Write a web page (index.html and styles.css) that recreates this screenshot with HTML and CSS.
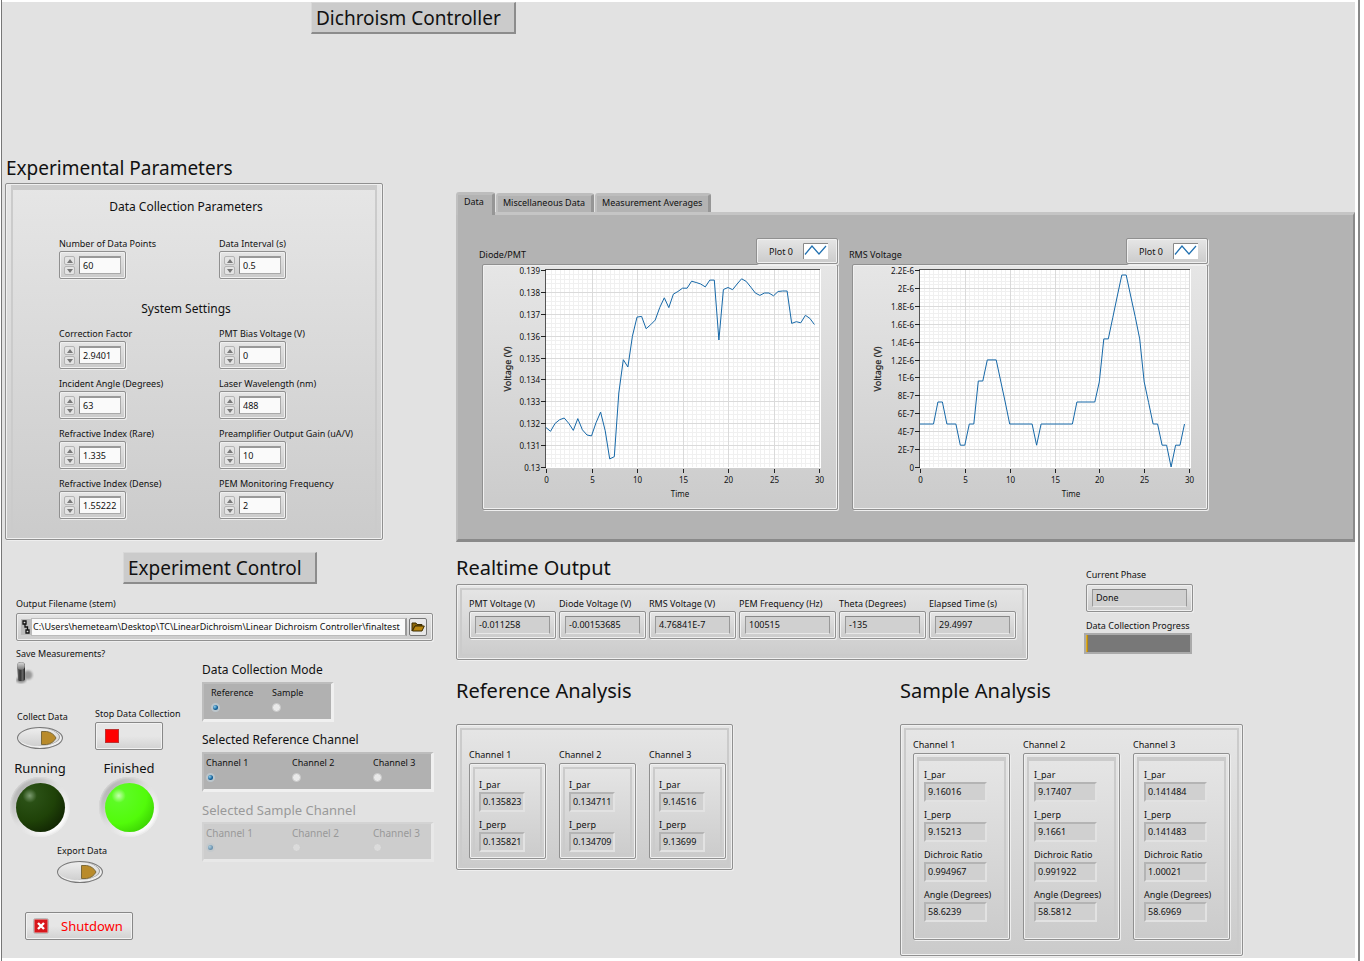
FILE: index.html
```html
<!DOCTYPE html>
<html lang="en">
<head>
<meta charset="utf-8">
<title>Dichroism Controller</title>
<link rel="stylesheet" href="styles.css">
</head>
<body>
<div class="window">
<main class="front-panel">
  <h1 class="plate plate-main">Dichroism Controller</h1>
  <div class="columns">
    <div class="left">
      <section>
        <h2 class="title">Experimental Parameters</h2>
        <div class="cluster params"><div class="cluster-in">
          <h3 class="subtitle">Data Collection Parameters</h3>
          <div class="fields" id="collection-fields"></div>
          <h3 class="subtitle">System Settings</h3>
          <div class="fields" id="system-fields"></div>
        </div></div>
      </section>

      <section class="control">
        <h2 class="plate plate-control">Experiment Control</h2>
        <label class="label" for="path">Output Filename (stem)</label>
        <div class="path bevel">
          <span class="path-mark"><svg width="8" height="14" viewBox="0 0 8 14"><path d="M1 1h3v3H1zM4 10h3v3H4zM3 4v3h2.500v3" fill="#ddd" stroke="#111" stroke-width="1.300"/></svg></span>
          <input id="path" type="text" value="C:\Users\hemeteam\Desktop\TC\LinearDichroism\Linear Dichroism Controller\finaltest">
          <button type="button" class="browse" aria-label="Browse"><svg width="14" height="10" viewBox="0 0 14 10"><path d="M1 9V1h4l1 1.500h5V4H4L1 9z" fill="#8a6508" stroke="#3d2c00"/><path d="M1.500 9 4 4h9.300L11 9z" fill="#b8860f" stroke="#3d2c00"/></svg></button>
        </div>
        <div class="control-grid">
          <div class="actions">
            <label class="label" for="save">Save Measurements?</label>
            <div class="toggle"><input id="save" type="checkbox">
              <svg width="20" height="24" viewBox="0 0 20 24">
                <defs><linearGradient id="lever"><stop offset="0" stop-color="#777"/><stop offset=".4" stop-color="#333"/><stop offset=".7" stop-color="#666"/><stop offset="1" stop-color="#222"/></linearGradient>
                <linearGradient id="tip" x2="0" y2="1"><stop offset="0" stop-color="#ddd"/><stop offset="1" stop-color="#777"/></linearGradient>
                <filter id="soft"><feGaussianBlur stdDeviation="1"/></filter></defs>
                <circle cx="12" cy="14" r="4.500" fill="#999" filter="url(#soft)"/>
                <ellipse cx="5" cy="19" rx="5" ry="3" fill="#888" filter="url(#soft)"/>
                <path d="M1 5a4 4 0 0 1 8 0v13q0 2-4 2t-3-2z" fill="url(#lever)"/>
                <circle cx="5" cy="5" r="3.800" fill="url(#tip)"/>
              </svg></div>
            <div class="pair">
              <div class="act"><span class="label" id="l-collect">Collect Data</span><button type="button" class="oval" aria-labelledby="l-collect"><svg width="16" height="14" viewBox="0 0 16 14"><path d="M.500.500h5Q12 1.500 15 7q-3 5.500-9.500 6.500h-5z" fill="#b98b2b" stroke="#7d6a3a"/></svg></button></div>
              <div class="act"><span class="label" id="l-stop">Stop Data Collection</span><button type="button" class="stop glossy" aria-labelledby="l-stop"><i></i></button></div>
            </div>
            <div class="leds">
              <div class="led-box"><span class="led-name">Running</span><span class="ring"><span class="led off"></span></span></div>
              <div class="led-box"><span class="led-name">Finished</span><span class="ring"><span class="led on"></span></span></div>
            </div>
            <div class="act export"><span class="label" id="l-export">Export Data</span><button type="button" class="oval" aria-labelledby="l-export"><svg width="16" height="14" viewBox="0 0 16 14"><path d="M.500.500h5Q12 1.500 15 7q-3 5.500-9.500 6.500h-5z" fill="#b98b2b" stroke="#7d6a3a"/></svg></button></div>
            <button type="button" class="shutdown glossy"><svg width="16" height="16" viewBox="0 0 16 16"><rect x=".500" y=".500" width="15" height="15" rx="2" fill="#d9c4c4" stroke="#bbb"/><rect x="1.500" y="1.500" width="13" height="13" fill="#d8161b"/><path d="M5 5l6 6M11 5l-6 6" stroke="#fff" stroke-width="2.400"/></svg>Shutdown</button>
          </div>
          <div class="modes">
            <fieldset class="radios short"><legend>Data Collection Mode</legend><div class="radio-box">
              <label>Reference<input type="radio" name="mode" checked></label><label>Sample<input type="radio" name="mode"></label></div></fieldset>
            <fieldset class="radios"><legend>Selected Reference Channel</legend><div class="radio-box">
              <label>Channel 1<input type="radio" name="ref" checked></label><label>Channel 2<input type="radio" name="ref"></label><label>Channel 3<input type="radio" name="ref"></label></div></fieldset>
            <fieldset class="radios" disabled><legend>Selected Sample Channel</legend><div class="radio-box">
              <label>Channel 1<input type="radio" name="smp" checked></label><label>Channel 2<input type="radio" name="smp"></label><label>Channel 3<input type="radio" name="smp"></label></div></fieldset>
          </div>
        </div>
      </section>
    </div>

    <div class="right">
      <section class="tabs">
        <div class="tab-row" role="tablist">
          <button type="button" role="tab" aria-selected="true" class="tab active">Data</button>
          <button type="button" role="tab" class="tab">Miscellaneous Data</button>
          <button type="button" role="tab" class="tab">Measurement Averages</button>
        </div>
        <div class="tab-page" role="tabpanel">
          <figure class="graph">
            <figcaption><span>Diode/PMT</span><span class="legend bevel">Plot 0 <svg width="25" height="16" viewBox="0 0 25 16"><path d="M0 0h25v16H0z" fill="#fff"/><path d="M.500 16V.500H25" fill="none" stroke="#888"/><path d="M2 11.500 9 3l7 8 7-8" fill="none" stroke="#2070b0" stroke-width="1.200"/></svg></span></figcaption>
            <div class="bevel plot"><svg id="diode" width="354" height="244" viewBox="0 0 354 244"></svg></div>
          </figure>
          <figure class="graph">
            <figcaption><span>RMS Voltage</span><span class="legend bevel">Plot 0 <svg width="25" height="16" viewBox="0 0 25 16"><path d="M0 0h25v16H0z" fill="#fff"/><path d="M.500 16V.500H25" fill="none" stroke="#888"/><path d="M2 11.500 9 3l7 8 7-8" fill="none" stroke="#2070b0" stroke-width="1.200"/></svg></span></figcaption>
            <div class="bevel plot"><svg id="rms" width="354" height="244" viewBox="0 0 354 244"></svg></div>
          </figure>
        </div>
      </section>

      <div class="output-row">
        <section>
          <h2 class="title">Realtime Output</h2>
          <div class="cluster realtime"><div class="cluster-in" id="realtime"></div></div>
        </section>
        <section class="status">
          <label class="label" for="phase">Current Phase</label>
          <div class="bevel readout"><output id="phase">Done</output></div>
          <label class="label" for="progress">Data Collection Progress</label>
          <progress id="progress" value="2" max="100"></progress>
        </section>
      </div>

      <div class="analysis-row">
        <section>
          <h2 class="title">Reference Analysis</h2>
          <div class="cluster analysis reference"><div class="cluster-in" id="reference"></div></div>
        </section>
        <section>
          <h2 class="title">Sample Analysis</h2>
          <div class="cluster analysis sample"><div class="cluster-in" id="sample"></div></div>
        </section>
      </div>
    </div>
  </div>
</main>
</div>
<script src="panel.js"></script>
</body>
</html>
```
FILE: panel.js
```js
const byId = id => document.getElementById(id);
let serial = 0;

function numeric(name, value) {
  const id = 'n' + (++serial);
  return `<div class="field"><label class="label" for="${id}">${name}</label>
    <div class="bevel numeric"><span class="spin"><button type="button" aria-label="Increase ${name}"><svg width="6" height="4"><path d="M3 0 6 4H0z"/></svg></button><button type="button" aria-label="Decrease ${name}"><svg width="6" height="4"><path d="M3 4 6 0H0z"/></svg></button></span><input id="${id}" type="text" value="${value}"></div></div>`;
}

function readout(name, value, cls) {
  const id = 'n' + (++serial);
  return `<div class="field"><label class="label" for="${id}">${name}</label><div class="${cls}"><output id="${id}">${value}</output></div></div>`;
}

byId('collection-fields').innerHTML = numeric('Number of Data Points', '60') + numeric('Data Interval (s)', '0.5');
byId('system-fields').innerHTML = [
  ['Correction Factor', '2.9401'], ['PMT Bias Voltage (V)', '0'],
  ['Incident Angle (Degrees)', '63'], ['Laser Wavelength (nm)', '488'],
  ['Refractive Index (Rare)', '1.335'], ['Preamplifier Output Gain (uA/V)', '10'],
  ['Refractive Index (Dense)', '1.55222'], ['PEM Monitoring Frequency', '2']
].map(f => numeric(...f)).join('');

byId('realtime').innerHTML = [
  ['PMT Voltage (V)', '-0.011258'], ['Diode Voltage (V)', '-0.00153685'], ['RMS Voltage (V)', '4.76841E-7'],
  ['PEM Frequency (Hz)', '100515'], ['Theta (Degrees)', '-135'], ['Elapsed Time (s)', '29.4997']
].map(f => readout(...f, 'bevel readout')).join('');

function channels(rows) {
  const names = ['I_par', 'I_perp', 'Dichroic Ratio', 'Angle (Degrees)'];
  return rows.map((values, i) => `<div class="channel"><span class="label">Channel ${i + 1}</span><div class="cluster"><div class="cluster-in">${
    values.map((v, k) => readout(names[k], v, 'sunken')).join('')}</div></div></div>`).join('');
}
byId('reference').innerHTML = channels([['0.135823', '0.135821'], ['0.134711', '0.134709'], ['9.14516', '9.13699']]);
byId('sample').innerHTML = channels([
  ['9.16016', '9.15213', '0.994967', '58.6239'],
  ['9.17407', '9.1661', '0.991922', '58.5812'],
  ['0.141484', '0.141483', '1.00021', '58.6969']
]);

function graph(id, left, right, titleX, axisX, ticks, data) {
  const top = 5, bottom = 202, max = ticks.length - 1;
  const x = t => left + (right - left) * t / 30;
  const y = v => bottom - (bottom - top) * v / max;
  const line = (x1, y1, x2, y2, cls) => `<path class="${cls}" d="M${x1} ${y1}L${x2} ${y2}"/>`;
  let s = `<rect class="area" x="${left}" y="${top - 1}" width="${right - left + 2}" height="${bottom - top + 2}"/>`;
  for (let i = 1; i < 60; i++) if (i % 10) s += line(Math.round(x(i / 2)) + .5, top, Math.round(x(i / 2)) + .5, bottom, 'minor');
  for (let i = 1; i < max * 5; i++) if (i % 5) s += line(left, Math.round(y(i / 5)) + .5, right, Math.round(y(i / 5)) + .5, 'minor');
  for (let t = 5; t <= 30; t += 5) s += line(Math.round(x(t)) + .5, top, Math.round(x(t)) + .5, bottom, 'major');
  for (let i = 1; i < max; i++) s += line(left, Math.round(y(i)) + .5, right, Math.round(y(i)) + .5, 'major');
  s += line(left - 1, top - .5, right + 1, top - .5, 'edge') + line(left - .5, top, left - .5, bottom + 1, 'edge');
  ticks.forEach((name, i) => {
    const py = Math.round(y(i)) + .5;
    s += line(left - 5, py, left, py, 'tick') + `<text x="${left - 6}" y="${py + 3}" text-anchor="end">${name}</text>`;
  });
  for (let t = 0; t <= 30; t += 5) {
    const px = Math.round(x(t)) + .5;
    s += line(px, bottom + 2, px, bottom + 6, 'tick') + `<text x="${px}" y="${bottom + 16}" text-anchor="middle">${t}</text>`;
  }
  s += `<text x="${titleX}" y="${bottom + 30}" text-anchor="middle">Time</text>`;
  s += `<text class="axis" transform="translate(${axisX} 104) rotate(-90)" text-anchor="middle">Voltage (V)</text>`;
  s += `<polyline points="${data.map(([t, v]) => x(t).toFixed(1) + ',' + y(v).toFixed(1)).join(' ')}"/>`;
  byId(id).innerHTML = s;
}

// Millivolts above 0.13 V, one sample every 0.5 s.
const diode = [1.8, 1.63, 1.99, 2.16, 2.24, 1.99, 1.67, 2.21, 1.7, 1.46, 1.42, 2.02, 2.51, 1.66, .37, .47, 3.38, 4.9, 4.57, 5.97,
  6.85, 6.88, 6.32, 6.5, 6.71, 7.29, 7.73, 7.28, 7.9, 8.02, 8.17, 8.17, 8.49, 8.43, 8.36, 8.23, 8.54, 8.54, 5.8, 8.11,
  8.2, 8.1, 8.36, 8.6, 8.48, 8.22, 7.95, 7.84, 7.95, 7.95, 7.82, 8.02, 8.04, 8.04, 6.56, 6.64, 6.59, 6.93, 6.79, 6.51];
graph('diode', 63, 336, 197, 28, ['0.13', '0.131', '0.132', '0.133', '0.134', '0.135', '0.136', '0.137', '0.138', '0.139'],
  diode.map((v, i) => [i / 2, v]));

// [seconds, units of 2E-7 V]
graph('rms', 67, 336, 218, 28, ['0', '2E-7', '4E-7', '6E-7', '8E-7', '1E-6', '1.2E-6', '1.4E-6', '1.6E-6', '1.8E-6', '2E-6', '2.2E-6'],
  [[0, 2.4], [1.5, 2.4], [2, 3.63], [2.5, 3.63], [3, 2.4], [4, 2.4], [4.5, 1.22], [5, 1.22], [5.5, 2.4], [6, 2.4], [6.5, 4.8], [7, 4.8],
   [7.5, 5.98], [8.5, 5.98], [9, 4.8], [9.5, 3.63], [10, 2.4], [12.5, 2.4], [13, 1.22], [13.5, 2.4], [17, 2.4], [17.5, 3.63], [19.5, 3.63],
   [20, 4.75], [20.5, 7.15], [21, 7.15], [21.5, 8.35], [22, 9.55], [22.5, 10.72], [23, 10.72], [23.5, 9.55], [24, 8.4], [24.5, 7.15],
   [25, 4.75], [25.5, 3.6], [26, 2.4], [26.5, 2.4], [27, 1.22], [27.5, 1.22], [28, 0], [28.5, 1.22], [29, 1.22], [29.5, 2.4]]);
```
FILE: styles.css
```css
* { box-sizing: border-box; }
body { margin: 0; background: #fff; color: #111; font: 9px/14px "Noto Sans", "Open Sans", sans-serif; }
h1, h2, h3, figure, fieldset { margin: 0; padding: 0; border: 0; font-weight: 400; }
input, button, output { font: inherit; color: inherit; }
button { padding: 0; }
svg { display: block; }

.window { min-height: 100vh; margin-left: 1px; margin-right: 4px; padding: 2px 3px 3px 0; border-left: 1px solid #777; border-right: 2px solid #888; }
.front-panel { min-height: calc(100vh - 5px); padding: 0 0 1px 3px; background: #e2e2e2; }
.columns { display: grid; grid-template-columns: 451px minmax(0, 1fr); margin-top: 120px; }
.right { padding-top: 38px; }

.plate { width: fit-content; padding: 1px 13px 0 4px; background: #cbcbcb; border-top: 1px solid #d8d8d8; border-left: 1px solid #d8d8d8; border-right: 2px solid #8c8c8c; border-bottom: 2px solid #8c8c8c; font-size: 19px; line-height: 28px; }
.plate-main { margin-left: 306px; }
.plate-control { margin-left: 118px; }
.title { font-size: 20px; line-height: 28px; }
.left .title { margin-bottom: 1px; padding-left: 1px; font-size: 19px; }
.subtitle { font-size: 12px; line-height: 20px; text-align: center; }
.label { display: block; width: fit-content; white-space: nowrap; }

.bevel, .cluster { border: 1px solid #909090; border-radius: 2px; background: linear-gradient(#e6e6e6, #cbcbcb); box-shadow: inset 0 0 0 1px #f0f0f0, 1px 1px 0 #eee; }
.cluster { padding: 3px; }
.cluster-in { border: 2px solid #cbcbcb; }

.params { width: 378px; height: 357px; padding: 1px 5px 3px; }
.params .cluster-in { height: 100%; border-top-width: 5px; padding: 7px 0 0 46px; }
.params .subtitle { margin-left: -62px; }
.fields { display: grid; grid-template-columns: 160px 160px; row-gap: 8px; margin: 20px 0; }
.subtitle + .fields + .subtitle + .fields { margin-top: 8px; }
.numeric { display: flex; gap: 4px; width: 67px; height: 28px; padding: 4px 4px 5px; }
.numeric input { width: 42px; height: 18px; padding: 0 3px; background: #fafafa; border: 1px solid #aaa; border-top: 2px solid #999; border-left-color: #888; outline: 0; }
.spin { display: grid; grid-template-rows: 9px 9px; gap: 1px; width: 11px; }
.spin button { display: grid; place-items: center; border: 1px solid #b4b4b4; border-radius: 2px; background: #e4e4e4; }
.spin path { fill: #777; }

.control { padding: 12px 0 0; }
.control > .label, .path { margin-left: 11px; }
.plate-control + .label { margin-top: 13px; }
.path { display: flex; align-items: center; width: 417px; height: 28px; margin-top: 2px; padding: 0 5px 1px 4px; }
.path-mark { display: grid; place-items: center; width: 10px; height: 16px; background: #bbb; }
.path input { flex: 1; min-width: 0; height: 18px; padding: 0 1px; background: #fafafa; border: 1px solid #bbb; border-right: 2px solid #999; outline: 0; }
.browse { display: grid; place-items: center; width: 18px; height: 18px; margin-left: 2px; background: #e8e8e8; border: 1px solid #777; border-radius: 2px; }
.control-grid { display: grid; grid-template-columns: 186px 232px; margin: 6px 0 0 11px; }
.toggle { position: relative; width: 20px; height: 24px; }
.toggle input { position: absolute; inset: 0; width: 100%; height: 100%; margin: 0; opacity: 0; }
.pair { display: flex; align-items: flex-start; gap: 22px; margin-top: 22px; }
.act:first-child { padding: 3px 0 0 1px; }
.pair .act { width: 57px; }
.pair .act + .act { width: 90px; }
.oval { display: flex; align-items: center; justify-content: flex-end; width: 46px; height: 22px; margin-top: 3px; padding-right: 5px; border: 1px solid #777; border-radius: 50%; background: linear-gradient(#eee, #ccc); box-shadow: inset -1px -1px 0 1px #eee, inset -2px -1px 0 1px #999; }
.glossy { display: flex; align-items: center; background: linear-gradient(#e6e6e6 50%, #d2d2d2); border: 1px solid #888; border-radius: 2px; box-shadow: inset 0 0 0 1px #f2f2f2; }
.stop { width: 68px; height: 28px; margin-top: 1px; padding-left: 9px; }
.stop i { width: 14px; height: 14px; background: #f00; border: 1px solid #b33; }
.leds { display: flex; margin: 9px 0 0 -6px; }
.led-box { display: flex; flex-direction: column; align-items: center; width: 60px; }
.led-box + .led-box { margin-left: 29px; }
.led-name { font-size: 13px; line-height: 18px; white-space: nowrap; }
.ring { display: grid; place-items: center; width: 60px; height: 60px; border-radius: 50%; background: linear-gradient(135deg, #aaa 10%, #ddd 45%, #fff 85%); box-shadow: inset 0 0 3px 1px #e2e2e2; }
.led { width: 49px; height: 49px; border-radius: 50%; }
.led.off { background: radial-gradient(circle at 28% 26%, #7d9c71 0, #2a5015 14%, #1f4208 50%, #0e1f02 88%); }
.led.on { background: radial-gradient(circle at 28% 26%, #c5ffad 0, #5dfb24 14%, #52fb0a 55%, #33c400 92%); }
.export { width: fit-content; margin: 7px 0 0 41px; }
.shutdown { gap: 12px; width: 108px; height: 28px; margin: 29px 0 0 9px; padding-left: 7px; color: #f00; font-size: 13px; }

.modes { padding-top: 13px; }
.radios { width: 232px; margin-bottom: 8px; }
.radios legend { padding: 0; font-size: 12px; line-height: 20px; white-space: nowrap; }
.radio-box { display: grid; grid-template-columns: 86px 81px 1fr; height: 40px; margin-top: 2px; padding: 2px 0 0 2px; background: #b1b1b1; border: 2px solid #bdbdbd; border-right: 3px solid #f0f0f0; border-bottom: 3px solid #f0f0f0; }
.short .radio-box { grid-template-columns: 61px 1fr; width: 132px; padding-left: 7px; }
.radios label { line-height: 14px; white-space: nowrap; }
.radios input { appearance: none; display: block; width: 9px; height: 9px; margin: 3px 0 0; border: 1px solid #c8c8c8; border-radius: 50%; background: #e9e9e9; }
.radios input:checked { border: 2px solid #bcc6cc; background: radial-gradient(circle at 35% 35%, #8fd0f0, #0d5b94 60%); }
.radios:disabled legend { color: #999; font-size: 13px; }
.radios:disabled .radio-box { color: #999; background: #cdcdcd; border-color: #d3d3d3 #e8e8e8 #e8e8e8 #d3d3d3; font-size: 10px; }
.radios:disabled input { opacity: .5; }

.tab-row { display: flex; align-items: flex-end; height: 20px; gap: 1px; }
.tab { height: 19px; padding: 0 6px 2px 5px; background: #b3b3b3; border: 0; border-top: 3px solid #bdbdbd; border-left: 2px solid #c0c0c0; border-right: 3px solid #969696; border-radius: 3px 3px 0 0; line-height: 12px; white-space: nowrap; }
.tab.active { position: relative; z-index: 1; height: 23px; margin-bottom: -3px; padding: 0 8px 6px 6px; }
.tab-page { display: flex; align-items: flex-start; gap: 11px; height: 330px; padding: 23px 0 0 21px; background: #b3b3b3; border: 2px solid #8a8a8a; border-top: 3px solid #c5c5c5; border-left-color: #bebebe; border-right-width: 2px; border-bottom-width: 3px; }
figcaption { display: flex; justify-content: space-between; align-items: flex-end; height: 26px; line-height: 19px; }
.legend { display: flex; align-items: center; gap: 10px; width: 82px; height: 26px; padding-left: 12px; }
.plot { width: 356px; margin-left: 3px; }
.plot path { fill: none; }
.plot .area { fill: #fff; }
.plot .minor { stroke: #f0f0f0; }
.plot .major { stroke: #dadada; }
.plot .edge { stroke: #555; }
.plot .tick { stroke: #222; }
.plot text { fill: #111; font-size: 8px; }
.plot .axis { font-size: 9px; stroke: #333; stroke-width: .2px; }
.plot polyline { fill: none; stroke: #1668a8; stroke-width: 1; }

.output-row { display: flex; gap: 58px; padding-top: 12px; }
.output-row .title { margin-bottom: 2px; }
.realtime { width: 572px; height: 76px; }
.realtime .cluster-in { display: flex; height: 68px; padding: 7px 0 0 7px; gap: 3px; }
.realtime .field { flex: 87px 0 0; }
.realtime .field:nth-child(4) { flex-basis: 97px; }
.readout { height: 28px; padding: 4px 5px; }
.readout output { display: block; height: 18px; padding: 0 3px; background: #d0d0d0; border: 1px solid #999; border-top-color: #888; border-bottom-color: #e8e8e8; line-height: 16px; }
.status { padding-top: 14px; }
.status .readout { width: 107px; margin: 2px 0 7px 0; }
progress { appearance: none; display: block; width: 108px; height: 21px; margin-left: -2px; border: 2px solid #aaa; background: #787878; }
progress::-webkit-progress-bar { background: #787878; }
progress::-webkit-progress-value { background: linear-gradient(90deg, #f0c030, #a87808); }

.analysis-row { display: grid; grid-template-columns: 444px auto; justify-content: start; padding-top: 17px; }
.analysis-row .title { margin-bottom: 19px; }
.analysis { width: fit-content; }
.analysis > .cluster-in { display: flex; gap: 13px; padding: 18px 1px 5px 7px; }
.channel > .cluster { width: 77px; margin-top: 1px; }
.channel .cluster-in { padding: 9px 0 1px 4px; }
.channel .field + .field { margin-top: 6px; }
.sunken { width: 46px; height: 20px; background: #d0d0d0; border: 2px solid #b4b4b4; border-right-color: #e2e2e2; border-bottom-color: #e2e2e2; }
.sunken output { display: block; overflow: hidden; padding-left: 2px; line-height: 16px; white-space: nowrap; }
.sample > .cluster-in { padding: 8px 7px 10px 7px; }
.sample .channel > .cluster { width: 97px; }
.sample .cluster-in .cluster-in { border-top-width: 4px; padding: 7px 0 12px 5px; }
.sample .sunken { width: 63px; }
```
